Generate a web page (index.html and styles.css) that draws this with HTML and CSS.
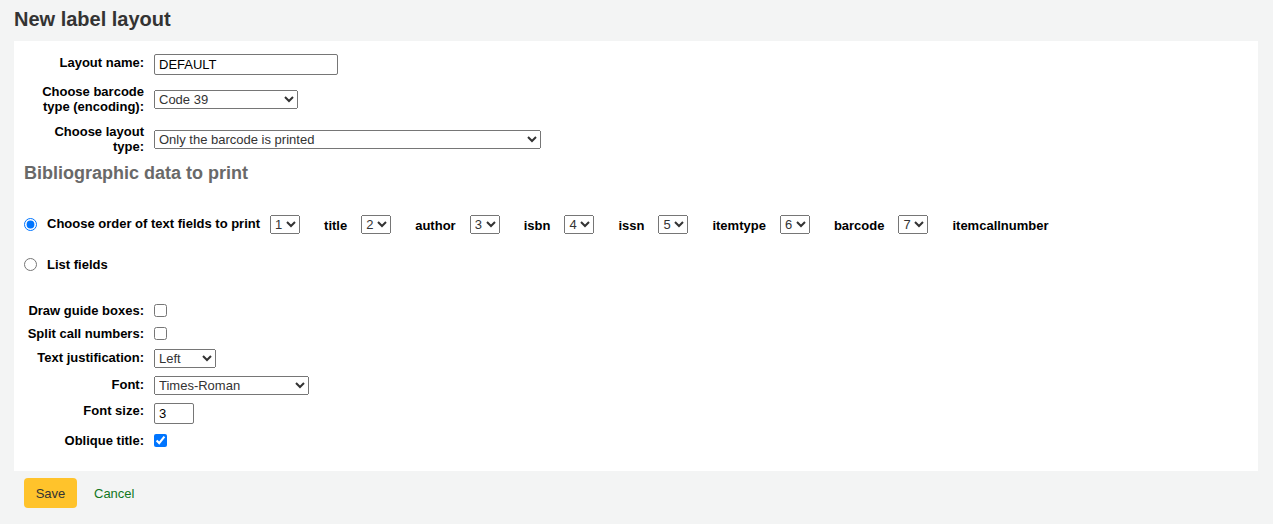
FILE: index.html
```html
<!DOCTYPE html>
<html>
<head>
<meta charset="utf-8">
<link rel="stylesheet" href="styles.css">
</head>
<body>
<h1 class="title">New label layout</h1>
<form class="panel">
  <div class="rows">
    <div class="row r1"><label class="lbl">Layout name:</label><input class="txt name" type="text" value="DEFAULT"></div>
    <div class="row r2"><label class="lbl">Choose barcode type (encoding):</label><select class="sel w-code"><option>Code 39</option></select></div>
    <div class="row r3"><label class="lbl">Choose layout type:</label><select class="sel w-layout"><option>Only the barcode is printed</option></select></div>
  </div>
  <h3 class="sub">Bibliographic data to print</h3>
  <div class="radio-row order">
    <input type="radio" name="t" class="rad" checked>
    <span class="rlbl">Choose order of text fields to print</span>
    <select class="sel num"><option>1</option></select><span class="fld">title</span>
    <select class="sel num"><option>2</option></select><span class="fld">author</span>
    <select class="sel num"><option>3</option></select><span class="fld">isbn</span>
    <select class="sel num"><option>4</option></select><span class="fld">issn</span>
    <select class="sel num"><option>5</option></select><span class="fld">itemtype</span>
    <select class="sel num"><option>6</option></select><span class="fld">barcode</span>
    <select class="sel num"><option>7</option></select><span class="fld">itemcallnumber</span>
  </div>
  <div class="radio-row list">
    <input type="radio" name="t" class="rad">
    <span class="rlbl">List fields</span>
  </div>
  <div class="rows lower">
    <div class="row c1"><label class="lbl">Draw guide boxes:</label><input class="chk" type="checkbox"></div>
    <div class="row c2"><label class="lbl">Split call numbers:</label><input class="chk" type="checkbox"></div>
    <div class="row c3"><label class="lbl">Text justification:</label><select class="sel w-just"><option>Left</option></select></div>
    <div class="row c4"><label class="lbl">Font:</label><select class="sel w-font"><option>Times-Roman</option></select></div>
    <div class="row c5"><label class="lbl">Font size:</label><input class="txt size" type="text" value="3"></div>
    <div class="row c6"><label class="lbl">Oblique title:</label><input class="chk" type="checkbox" checked></div>
  </div>
</form>
<div class="actions">
  <button class="save" type="button">Save</button>
  <a class="cancel" href="#">Cancel</a>
</div>
</body>
</html>
```

FILE: styles.css
```css
html, body {
  margin: 0;
  padding: 0;
}
body {
  background: #f3f4f4;
  font-family: "Liberation Sans", Arial, sans-serif;
  font-size: 13px;
  color: #000;
  padding: 0 15px 0 14px;
}
.title {
  margin: 0;
  padding-top: 7px;
  height: 41px;
  box-sizing: border-box;
  font-size: 20px;
  font-weight: bold;
  color: #333;
  line-height: 24px;
}
.panel {
  background: #fff;
  padding: 13px 10px 23px 10px;
}
.row {
  display: flex;
  align-items: flex-start;
}
.lbl {
  width: 120px;
  margin-right: 10px;
  text-align: right;
  font-weight: bold;
  line-height: 15px;
  flex: none;
}
.txt {
  font-family: "Liberation Sans", Arial, sans-serif;
  font-size: 13px;
  height: 21px;
  box-sizing: border-box;
  border: 1px solid #767676;
  border-radius: 2px;
  padding: 1px 4px;
  margin: 0;
  color: #000;
}
.name { width: 184px; }
.size { width: 40px; }
.sel {
  font-family: "Liberation Sans", Arial, sans-serif;
  font-size: 13px;
  height: 19px;
  margin: 0;
  color: #333;
  flex: none;
}
.w-code { width: 144px; }
.w-layout { width: 387px; }
.w-just { width: 62px; }
.w-font { width: 155px; }
.num { width: 30px; }

.r1 .lbl { padding-top: 1px; }
.r2 { margin-top: 15px; }
.r2 .lbl { margin-top: -6px; }
.r3 { margin-top: 16px; }
.r3 .lbl { margin-top: -6px; }

.sub {
  margin: 7px 0 0 0;
  font-size: 18px;
  line-height: 24px;
  font-weight: bold;
  color: #696969;
}
.radio-row {
  display: flex;
  align-items: center;
  font-weight: bold;
}
.order { margin-top: 30px; }
.list { margin-top: 23px; }
.rad {
  margin: 0 10px 0 0;
  width: 13px;
  height: 13px;
}
.rlbl { margin-right: 10px; }
.order .rlbl { position: relative; top: -1px; }
.fld {
  margin-left: 24px;
  margin-right: 14px;
  position: relative;
  top: 1px;
}
.lower { margin-top: 31px; }
.chk {
  margin: 0;
  width: 13px;
  height: 13px;
}
.c1, .c2, .c6 { align-items: center; }
.c2 { margin-top: 8px; }
.c3 { margin-top: 8px; }
.c3 .lbl, .c4 .lbl { margin-top: 1px; }
.c4 { margin-top: 8px; }
.c5 { margin-top: 8px; }
.c6 { margin-top: 9px; }

.actions {
  display: flex;
  align-items: center;
  padding: 7px 0 0 10px;
}
.save {
  background: #ffc32b;
  border: none;
  border-radius: 4px;
  width: 53px;
  height: 30px;
  font-family: "Liberation Sans", Arial, sans-serif;
  font-size: 13px;
  color: #333;
  padding: 0;
}
.cancel {
  margin-left: 17px;
  color: #117722;
  text-decoration: none;
}
```
